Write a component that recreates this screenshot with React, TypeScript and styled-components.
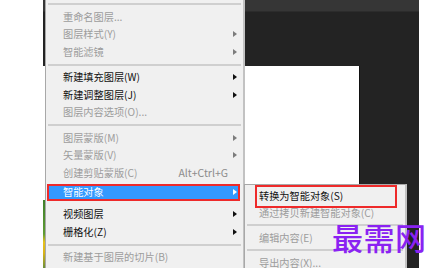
import styled, { createGlobalStyle, css } from 'styled-components';

const GlobalStyle = createGlobalStyle`
  html, body {
    margin: 0;
    padding: 0;
    background: #fff;
  }
  body {
    font-family: "Noto Sans CJK SC", "Liberation Sans", sans-serif;
  }
`;

const Screen = styled.div`
  position: relative;
  width: 445px;
  height: 268px;
  overflow: hidden;
  display: grid;
  grid-template-columns: 43px 376px 1fr;
  background: #fff;
`;

const Workspace = styled.div`
  grid-column: 2;
  display: flex;
  flex-direction: column;
  background: #232323;
`;

const TabBand = styled.div`
  height: 12px;
  box-sizing: border-box;
  background: #363636;
  border-bottom: 1px solid #2c2c2c;
`;

// white document canvas sitting inside the dark work area
const Stage = styled.div`
  flex: 1;
  display: flex;
  padding: 54px 59px 0 0;
`;

const Canvas = styled.div`
  flex: 1;
  display: flex;
  flex-direction: column;
  justify-content: flex-end;
  background: #fff;
  border-right: 1px solid #111;
`;

const Photo = styled.div`
  width: 40px;
  height: 68px;
  background: linear-gradient(
    180deg,
    #3f7f2a 0%,
    #5f9c33 50%,
    #e6c21c 62%,
    #d9b318 78%,
    #6c8f3a 100%
  );
`;

const Menu = styled.ul<{ $left: number; $top: number; $width: number; $pad?: number }>`
  position: absolute;
  left: ${(p) => p.$left}px;
  top: ${(p) => p.$top}px;
  width: ${(p) => p.$width}px;
  box-sizing: border-box;
  margin: 0;
  padding: ${(p) => p.$pad ?? 0}px 0 20px;
  list-style: none;
  background: #f0f0f0;
  border: 1px solid #a8a8a8;
  border-right: 2px solid #c2c2c2;
  font-size: 10.2px;
  line-height: 1;
`;

const Item = styled.li<{ $disabled?: boolean; $active?: boolean; $h?: number; $indent?: number }>`
  position: relative;
  display: flex;
  align-items: center;
  height: ${(p) => p.$h ?? 17.5}px;
  padding: 0 6px 0 ${(p) => p.$indent ?? 17}px;
  color: ${(p) => (p.$disabled ? '#9c9c9c' : '#101010')};
  white-space: nowrap;

  ${(p) =>
    p.$active &&
    css`
      box-sizing: border-box;
      height: 17px;
      margin: 2px 3px 5px 1px;
      padding: 0 1px 0 14px;
      background: #3399ff;
      color: #fff;
      border: 2px solid #ee2a2a;
    `}
`;

// red annotation frame drawn over a submenu row
const Boxed = styled(Item)`
  &::after {
    content: '';
    position: absolute;
    top: -2.5px;
    bottom: -3.5px;
    left: 10px;
    right: 8px;
    border: 2px solid #ee2a2a;
  }
`;

const Label = styled.span`
  flex: 1;
`;

const Shortcut = styled.span`
  color: #8c8c8c;
  margin-right: 5px;
  font-size: 10.5px;
`;

const Arrow = styled.span<{ $tone?: string; $hidden?: boolean }>`
  width: 0;
  height: 0;
  border-left: 4px solid ${(p) => p.$tone ?? 'currentColor'};
  border-top: 3.5px solid transparent;
  border-bottom: 3.5px solid transparent;
  visibility: ${(p) => (p.$hidden ? 'hidden' : 'visible')};
`;

const Separator = styled.li<{ $h?: number; $offset?: number }>`
  height: ${(p) => p.$h ?? 8}px;
  display: flex;
  flex-direction: column;
  padding-top: ${(p) => p.$offset ?? 3}px;
  box-sizing: border-box;

  &::after {
    content: '';
    height: 2px;
    margin: 0 2px;
    background: #cfcfcf;
  }
`;

const Watermark = styled.div`
  position: absolute;
  left: 332px;
  top: 224px;
  font-family: "Noto Sans CJK SC", sans-serif;
  font-size: 31px;
  font-weight: 500;
  line-height: 26px;
  color: #8a22f2;
  letter-spacing: 0.5px;
`;

type Entry =
  | { sep: true }
  | { label: string; disabled?: boolean; sub?: boolean; shortcut?: string; active?: boolean };

const mainEntries: Entry[] = [
  { sep: true },
  { label: '重命名图层...', disabled: true },
  { label: '图层样式(Y)', disabled: true, sub: true },
  { label: '智能滤镜', disabled: true, sub: true },
  { sep: true },
  { label: '新建填充图层(W)', sub: true },
  { label: '新建调整图层(J)', sub: true },
  { label: '图层内容选项(O)...', disabled: true },
  { sep: true },
  { label: '图层蒙版(M)', disabled: true, sub: true },
  { label: '矢量蒙版(V)', disabled: true, sub: true },
  { label: '创建剪贴蒙版(C)', disabled: true, shortcut: 'Alt+Ctrl+G' },
  { label: '智能对象', sub: true, active: true },
  { label: '视频图层', sub: true },
  { label: '栅格化(Z)', sub: true },
  { sep: true },
  { label: '新建基于图层的切片(B)', disabled: true },
  { sep: true },
  { label: '图层编组(G)', disabled: true },
];

export default function App() {
  return (
    <>
      <GlobalStyle />
      <Screen>
        <Workspace>
          <TabBand />
          <Stage>
            <Canvas>
              <Photo />
            </Canvas>
          </Stage>
        </Workspace>

        <Menu $left={45} $top={-1} $width={200}>
          {mainEntries.map((e, i) =>
            'sep' in e ? (
              <Separator key={i} />
            ) : (
              <Item key={i} $disabled={e.disabled} $active={e.active}>
                <Label>{e.label}</Label>
                {e.shortcut && <Shortcut>{e.shortcut}</Shortcut>}
                <Arrow $hidden={!e.sub} $tone={e.disabled ? '#7c7c7c' : undefined} />
              </Item>
            )
          )}
        </Menu>

        <Menu $left={244} $top={184} $width={163} $pad={2.5}>
          <Boxed $h={17} $indent={14}>
            <Label>转换为智能对象(S)</Label>
          </Boxed>
          <Item $h={17} $indent={14} $disabled>
            <Label>通过拷贝新建智能对象(C)</Label>
          </Item>
          <Separator $offset={2} />
          <Item $h={17} $indent={14} $disabled>
            <Label>编辑内容(E)</Label>
          </Item>
          <Separator $offset={2} />
          <Item $h={17} $indent={14} $disabled>
            <Label>导出内容(X)...</Label>
          </Item>
        </Menu>

        <Watermark>最需网</Watermark>
      </Screen>
    </>
  );
}
